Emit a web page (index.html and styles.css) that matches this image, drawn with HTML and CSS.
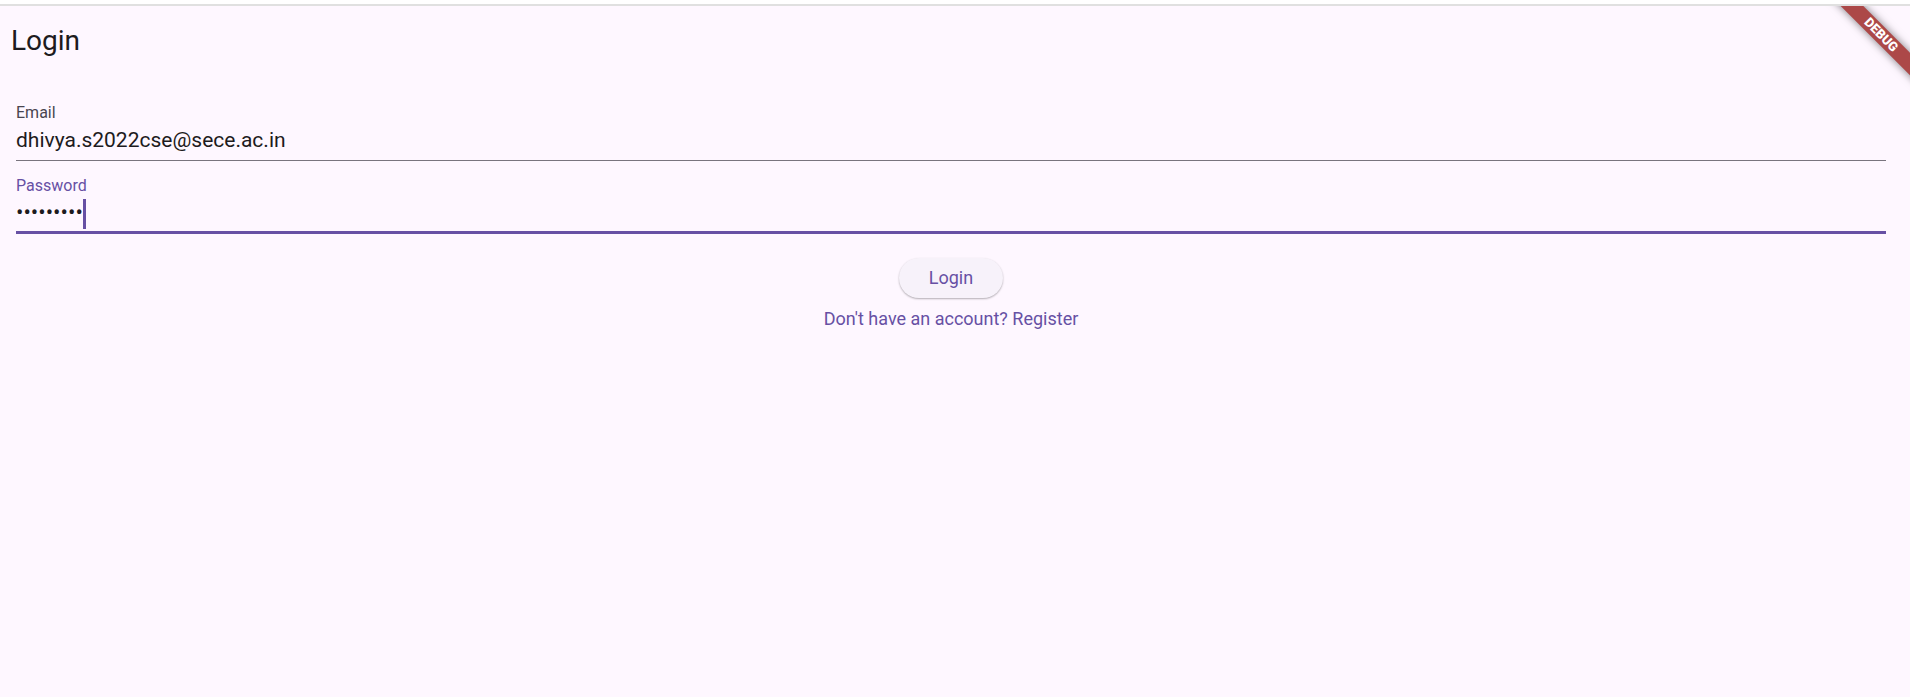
FILE: index.html
```
<!DOCTYPE html>
<html lang="en">
<head>
<meta charset="utf-8">
<title>Login</title>
<link rel="stylesheet" href="styles.css">
</head>
<body>
<div class="app">
  <header class="app-bar"><h1 class="title">Login</h1></header>
  <form class="form">
    <div class="field">
      <label class="label" for="email">Email</label>
      <input class="input" id="email" type="email" value="dhivya.s2022cse@sece.ac.in">
    </div>
    <div class="field field-active">
      <label class="label" for="password">Password</label>
      <input class="input" id="password" type="password" value="secret123">
      <span class="caret"></span>
    </div>
    <button class="button" type="button">Login</button>
    <a class="link" href="#register">Don't have an account? Register</a>
  </form>
  <div class="banner-clip"><span class="banner">DEBUG</span></div>
</div>
</body>
</html>
```
FILE: styles.css
```
* { box-sizing: border-box; }
body {
  margin: 0;
  border-top: 4px solid #fff;
  background: #fef7ff;
  color: #1d1b20;
  font-family: Roboto, sans-serif;
}
.app {
  position: relative;
  min-height: calc(100vh - 4px);
  border-top: 2px solid #e0e0e0;
}
.app-bar {
  display: flex;
  align-items: center;
  height: 70px;
  padding: 0 11px;
}
.title {
  margin: 0;
  font-size: 28px;
  line-height: 36px;
  font-weight: 400;
}
.form {
  display: flex;
  flex-direction: column;
  align-items: center;
  padding: 27px 24px 0 16px;
}
.field {
  position: relative;
  display: flex;
  flex-direction: column;
  width: 100%;
  padding-bottom: 3px;
  border-bottom: 1px solid #79747e;
}
.label {
  font-size: 16px;
  line-height: 20px;
  color: #49454f;
}
.input {
  width: 100%;
  height: 34px;
  padding: 0;
  border: 0;
  outline: 0;
  background: transparent;
  color: inherit;
  font: 21px/34px Roboto, sans-serif;
}
.field-active {
  margin-top: 15px;
  padding-bottom: 1px;
  border-bottom: 3px solid #6750a4;
}
.field-active .label { color: #6750a4; }
.field-active .input { font-size: 22px; }
.caret {
  position: absolute;
  left: 67px;
  bottom: 2px;
  width: 3px;
  height: 30px;
  background: #6750a4;
}
.button {
  height: 40px;
  margin-top: 24px;
  padding: 0 30px;
  border: 0;
  border-radius: 20px;
  background: #f7f2fa;
  box-shadow: 0 1px 2px rgba(0, 0, 0, 0.3);
  color: #6750a4;
  font: 18px/24px Roboto, sans-serif;
}
.link {
  margin-top: 9px;
  color: #6750a4;
  font-size: 18px;
  line-height: 24px;
  text-decoration: none;
}
.banner-clip {
  position: absolute;
  top: 0;
  right: 0;
  width: 100px;
  height: 100px;
  overflow: hidden;
}
.banner {
  position: absolute;
  top: 21px;
  right: -41px;
  width: 140px;
  transform: rotate(45deg);
  background: #ac4848;
  box-shadow: 0 0 8px rgba(0, 0, 0, 0.5);
  color: #fff;
  font-size: 13px;
  line-height: 16px;
  font-weight: 900;
  text-align: center;
}
```
